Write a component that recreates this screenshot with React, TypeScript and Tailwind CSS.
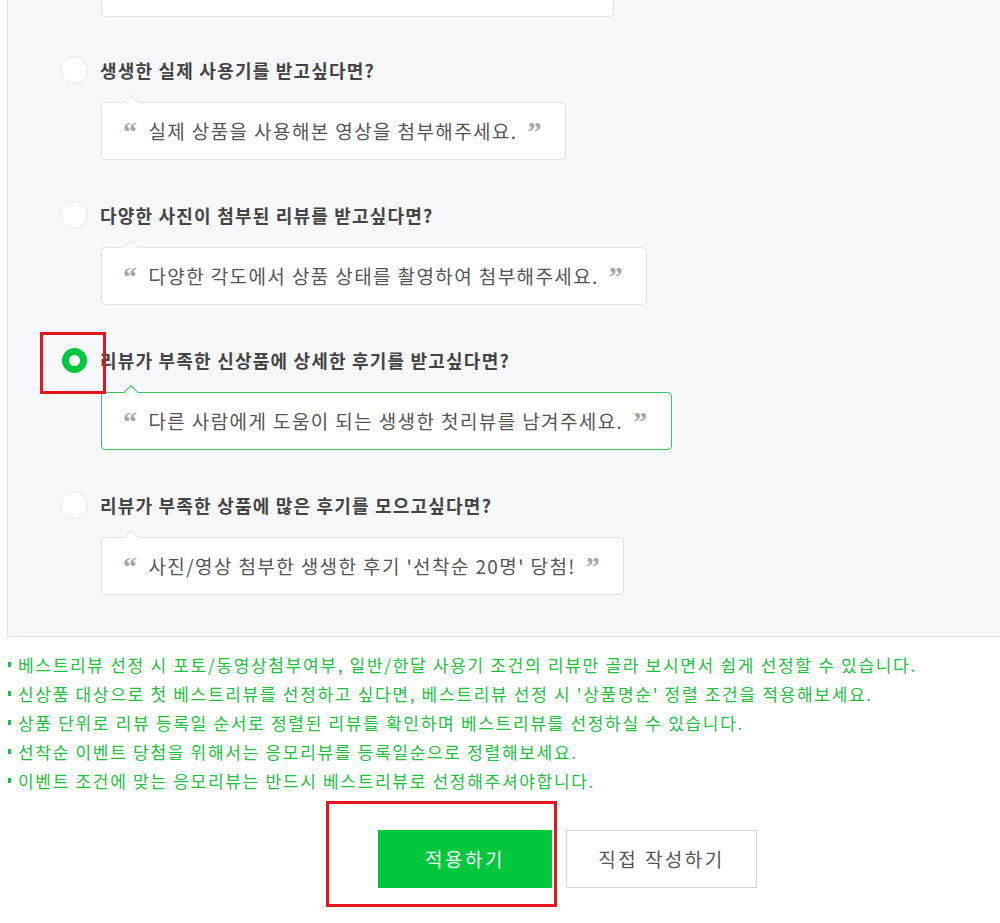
const options = [
  { title: '생생한 실제 사용기를 받고싶다면?', quote: '실제 상품을 사용해본 영상을 첨부해주세요.' },
  { title: '다양한 사진이 첨부된 리뷰를 받고싶다면?', quote: '다양한 각도에서 상품 상태를 촬영하여 첨부해주세요.' },
  { title: '리뷰가 부족한 신상품에 상세한 후기를 받고싶다면?', quote: '다른 사람에게 도움이 되는 생생한 첫리뷰를 남겨주세요.' },
  { title: '리뷰가 부족한 상품에 많은 후기를 모으고싶다면?', quote: "사진/영상 첨부한 생생한 후기 '선착순 20명' 당첨!" },
]

const notes = [
  '베스트리뷰 선정 시 포토/동영상첨부여부, 일반/한달 사용기 조건의 리뷰만 골라 보시면서 쉽게 선정할 수 있습니다.',
  "신상품 대상으로 첫 베스트리뷰를 선정하고 싶다면, 베스트리뷰 선정 시 '상품명순' 정렬 조건을 적용해보세요.",
  '상품 단위로 리뷰 등록일 순서로 정렬된 리뷰를 확인하며 베스트리뷰를 선정하실 수 있습니다.',
  '선착순 이벤트 당첨을 위해서는 응모리뷰를 등록일순으로 정렬해보세요.',
  '이벤트 조건에 맞는 응모리뷰는 반드시 베스트리뷰로 선정해주셔야합니다.',
]

const selected = 2

const Radio = ({ on }: { on: boolean }) =>
  on ? (
    <span className="w-[28px] h-[28px] flex items-center justify-center shrink-0">
      <span className="w-[25px] h-[25px] rounded-full border-[7px] border-[#00c73c] bg-white" />
    </span>
  ) : (
    <span className="w-[28px] h-[28px] rounded-full bg-white border border-[#e6e8ee] shrink-0" />
  )

const Mark = ({ c }: { c: string }) => (
  <span
    className="inline-block text-[28px] leading-none font-bold text-[#a6a6a6] h-[18px] -translate-y-[4px]"
    style={{ fontFamily: '"Liberation Serif", serif' }}
  >
    {c}
  </span>
)

export default function App() {
  return (
    <div
      className="relative w-full h-[923px] bg-white overflow-hidden"
      style={{ fontFamily: '"Noto Sans CJK KR", "Noto Sans", sans-serif' }}
    >
      {/*option panel*/}
      <div className="ml-[7px] bg-[#f7f8fb] border-l border-b border-[#e2e3e6] pb-[41px]">
        {/*previous bubble, cut off at the top*/}
        <div className="ml-[93px] w-[513px] h-[17px] bg-white border-x border-b border-[#e1e3e8] rounded-b-[4px]" />

        <div className="flex flex-col gap-[41px] pt-[39px]">
          {options.map((o, i) => {
            const on = i === selected
            return (
              <div key={o.title} className="flex flex-col">
                <div className="flex items-center gap-[12px] ml-[52px] h-[28px]">
                  <Radio on={on} />
                  <span className="text-[18px] font-bold text-[#444] tracking-[1.2px] whitespace-nowrap">{o.title}</span>
                </div>
                <div className="ml-[93px] mt-[18px]">
                  <div
                    className={`relative inline-flex items-center h-[58px] pl-[21px] pr-[22px] bg-white rounded-[4px] border ${on ? 'border-[#3cc45c]' : 'border-[#e1e3e8]'}`}
                  >
                    {/*tail*/}
                    <span
                      className={`absolute -top-[6px] left-[24px] w-[10px] h-[10px] rotate-45 bg-white border-l border-t ${on ? 'border-[#3cc45c]' : 'border-[#e1e3e8]'}`}
                    />
                    <span className="flex items-center gap-[10px] text-[19px] text-[#555] tracking-[1.4px] whitespace-nowrap">
                      <Mark c="“" />
                      <span>{o.quote}</span>
                      <Mark c="”" />
                    </span>
                  </div>
                </div>
              </div>
            )
          })}
        </div>
      </div>

      {/*notes*/}
      <ul className="pt-[13px] pl-[8px] text-[#1ebf42] text-[17px] tracking-[1.7px]">
        {notes.map(n => (
          <li key={n} className="flex items-center h-[29px] whitespace-nowrap">
            <span className="w-[3px] h-[5px] bg-[#1ebf42] mr-[7px] shrink-0" />
            {n}
          </li>
        ))}
      </ul>

      {/*buttons*/}
      <div className="flex gap-[14px] ml-[378px] mt-[35px]">
        <button className="w-[174px] h-[58px] bg-[#00c73c] text-white text-[19px] tracking-[2.5px]">적용하기</button>
        <button className="w-[191px] h-[58px] bg-white border border-[#d5d5d5] text-[#555] text-[19px] tracking-[2.5px]">직접 작성하기</button>
      </div>

      {/*red annotation boxes*/}
      <div className="absolute left-[40px] top-[332px] w-[66px] h-[62px] border-[3px] border-[#e5141e]" />
      <div className="absolute left-[326px] top-[801px] w-[231px] h-[106px] border-[3px] border-[#e5141e]" />
    </div>
  )
}
